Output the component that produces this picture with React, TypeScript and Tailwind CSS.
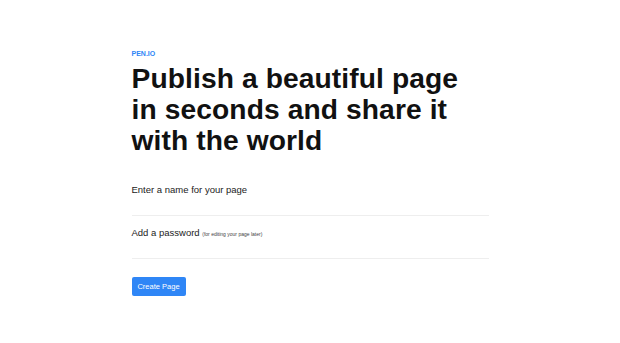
export default function App() {
  return (
    <div className="min-h-[343px] w-full bg-white" style={{ fontFamily: '"Liberation Sans", Arial, sans-serif' }}>
      <div className="mx-auto w-[357px] pt-[49px]">
        <div className="text-[7px] font-bold leading-[9px] text-[#2f86f6]">PEN.IO</div>
        <h1 className="mt-[5px] text-[28.2px] font-bold leading-[31px] tracking-[0.1px] text-[#111]">
          Publish a beautiful page
          <br />
          in seconds and share it
          <br />
          with the world
        </h1>

        <form className="mt-[27px]">
          <div className="flex h-[33px] flex-col border-b border-[#eeeeee]">
            <label className="block text-[9.5px] leading-[13px] text-[#222]">
              Enter a name for your page
            </label>
            <input className="m-0 block h-[18px] w-full p-0 outline-none" />
          </div>
          <div className="flex h-[43px] flex-col border-b border-[#eeeeee] pt-[10px]">
            <label className="block text-[9.5px] leading-[13px] text-[#222]">
              Add a password <span className="text-[5px] text-[#444]">(for editing your page later)</span>
            </label>
            <input type="password" className="m-0 block h-[18px] w-full p-0 outline-none" />
          </div>
          <button
            type="button"
            className="mt-[18px] flex h-[19px] w-[54px] items-center justify-center rounded-[2px] bg-[#2f86f6] text-[7.5px] text-white"
          >
            Create Page
          </button>
        </form>
      </div>
    </div>
  );
}
